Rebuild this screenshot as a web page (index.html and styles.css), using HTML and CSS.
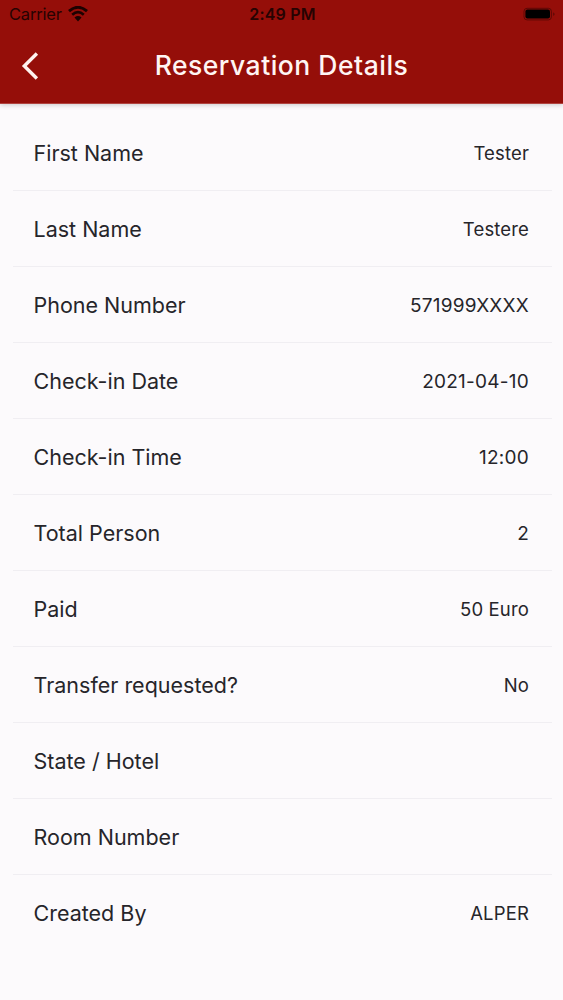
FILE: index.html
```html
<!DOCTYPE html>
<html lang="en">
<head>
    <meta charset="UTF-8">
    <title>Reservation Details</title>
    <link rel="stylesheet" href="styles.css">
</head>
<body>
<header class="header">
    <div class="status">
        <div class="carrier">
            <span>Carrier</span>
            <svg class="wifi" width="20" height="16" viewBox="0 0 20 16">
                <path d="M1 5.2Q10-2.6 19 5.2" stroke-width="2.9"/>
                <path d="M4.2 8.7Q10 3.7 15.8 8.7" stroke-width="2.7"/>
                <path class="wifi-dot" d="M6.5 11.4Q10 8.6 13.5 11.4L10 15.4Z"/>
            </svg>
        </div>
        <span class="time">2:49 PM</span>
        <svg class="battery" width="33" height="14" viewBox="0 0 33 14">
            <rect class="battery-case" x="1" y="1.3" width="27.4" height="11.6" rx="3"/>
            <rect x="2.4" y="2.6" width="24.6" height="9" rx="2"/>
            <path d="M30.4 5.2Q32.6 7.1 30.4 9Z" opacity=".5"/>
        </svg>
    </div>
    <div class="navbar">
        <svg class="back" width="20" height="28" viewBox="0 0 20 28">
            <path d="M16.9 1.5L4.3 14L16.9 26.5"/>
        </svg>
        <h1 class="title">Reservation Details</h1>
    </div>
</header>

<main class="list">
    <div class="row"><span class="label">First Name</span><span class="value">Tester</span></div>
    <div class="row"><span class="label">Last Name</span><span class="value">Testere</span></div>
    <div class="row"><span class="label">Phone Number</span><span class="value number">571999XXXX</span></div>
    <div class="row"><span class="label">Check-in Date</span><span class="value number">2021-04-10</span></div>
    <div class="row"><span class="label">Check-in Time</span><span class="value number">12:00</span></div>
    <div class="row"><span class="label">Total Person</span><span class="value number">2</span></div>
    <div class="row"><span class="label">Paid</span><span class="value">50 Euro</span></div>
    <div class="row"><span class="label">Transfer requested?</span><span class="value">No</span></div>
    <div class="row"><span class="label">State / Hotel</span><span class="value"></span></div>
    <div class="row"><span class="label">Room Number</span><span class="value"></span></div>
    <div class="row"><span class="label">Created By</span><span class="value">ALPER</span></div>
</main>
</body>
</html>
```
FILE: styles.css
```css
* {
    box-sizing: border-box;
}

body {
    margin: 0;
    min-height: 1000px;
    background: #fcfafc;
    color: #26252a;
    font-family: Inter, "Liberation Sans", sans-serif;
}

.header {
    height: 104px;
    background: #950e09;
    border-bottom: 1px solid #b0433f;
    box-shadow: 0 1px 5px rgba(0, 0, 0, .2);
}

.status {
    display: grid;
    grid-template-columns: 1fr auto 1fr;
    align-items: center;
    height: 28px;
    padding: 0 7px 0 9px;
    color: #260302;
}

.carrier {
    display: flex;
    align-items: center;
    gap: 6px;
    font-size: 16.5px;
    letter-spacing: -.2px;
}

.wifi {
    fill: none;
    stroke: #1c0201;
}

.wifi-dot {
    fill: #1c0201;
    stroke: none;
}

.time {
    font-size: 16px;
    font-weight: 600;
    letter-spacing: .2px;
}

.battery {
    justify-self: end;
}

.battery-case {
    fill: none;
    stroke: #5c0805;
}

.navbar {
    display: grid;
    grid-template-columns: 40px 1fr 40px;
    align-items: center;
    height: 75px;
    padding: 0 20px;
}

.back {
    fill: none;
    stroke: #fff2ef;
    stroke-width: 3.4;
}

.title {
    margin: 0;
    padding-bottom: 1px;
    color: #fff5f3;
    font-size: 26.5px;
    font-weight: 500;
    letter-spacing: .5px;
    text-align: center;
    white-space: nowrap;
}

.list {
    padding: 11px 11px 0 13px;
}

.row {
    display: flex;
    align-items: center;
    justify-content: space-between;
    height: 76px;
    padding: 0 23px 0 20.5px;
    border-bottom: 1px solid #f0eef2;
}

.row:last-child {
    border-bottom: none;
}

.label {
    font-size: 21.5px;
    letter-spacing: 0;
}

.value {
    font-size: 18.5px;
    letter-spacing: .15px;
}

.number {
    padding-top: 1px;
    font-size: 19px;
    letter-spacing: .25px;
}
```
